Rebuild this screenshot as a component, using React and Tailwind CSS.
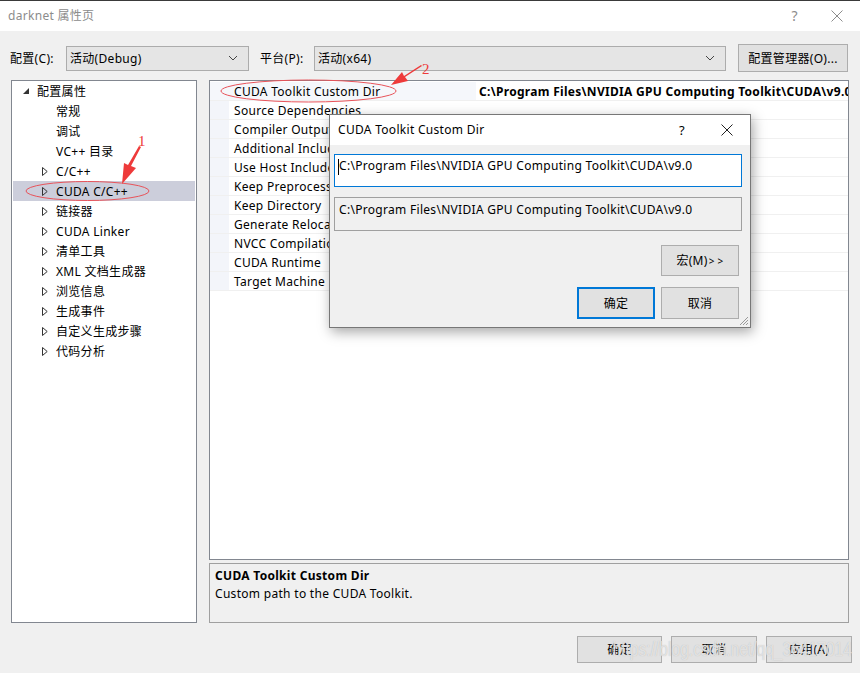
import React from 'react';

const treeItems = [
  { label: '配置属性', level: 0, expanded: true },
  { label: '常规', level: 1 },
  { label: '调试', level: 1 },
  { label: 'VC++ 目录', level: 1 },
  { label: 'C/C++', level: 1, arrow: true },
  { label: 'CUDA C/C++', level: 1, arrow: true, selected: true },
  { label: '链接器', level: 1, arrow: true },
  { label: 'CUDA Linker', level: 1, arrow: true },
  { label: '清单工具', level: 1, arrow: true },
  { label: 'XML 文档生成器', level: 1, arrow: true },
  { label: '浏览信息', level: 1, arrow: true },
  { label: '生成事件', level: 1, arrow: true },
  { label: '自定义生成步骤', level: 1, arrow: true },
  { label: '代码分析', level: 1, arrow: true },
];

const props = [
  'CUDA Toolkit Custom Dir',
  'Source Dependencies',
  'Compiler Output (obj/cubin)',
  'Additional Include Directories',
  'Use Host Include Directories',
  'Keep Preprocessed Files',
  'Keep Directory',
  'Generate Relocatable Device Code',
  'NVCC Compilation Type',
  'CUDA Runtime',
  'Target Machine Platform',
];

function Chevron() {
  return (
    <svg width="10" height="6" viewBox="0 0 10 6" className="shrink-0">
      <path d="M1 1 L5 5 L9 1" fill="none" stroke="#444" strokeWidth="1" />
    </svg>
  );
}

function Select({ text, width }) {
  return (
    <div className={`${width} h-[25px] bg-[#e5e5e5] border border-[#acacac] flex items-center justify-between pl-[3px] pr-[10px]`}>
      <span className="pt-[1px]">{text}</span>
      <Chevron />
    </div>
  );
}

function Btn({ children, className = '' }) {
  return (
    <div className={`bg-[#e1e1e1] border border-[#adadad] flex items-center justify-center ${className}`}>
      {children}
    </div>
  );
}

function TreeRow({ item }) {
  return (
    <div className={`h-[20px] mx-[1px] flex items-center ${item.selected ? 'bg-[#cccedb]' : ''}`}>
      {item.level === 0 ? (
        <>
          <svg width="7" height="7" viewBox="0 0 7 7" className="ml-[10px] mr-[7px]">
            <path d="M6 0 L6 6 L0 6 Z" fill="#333" />
          </svg>
          <span className="pt-[2px]">{item.label}</span>
        </>
      ) : (
        <>
          <span className="w-[43px] pl-[29px] flex items-center">
            {item.arrow && (
              <svg width="6" height="9" viewBox="0 0 6 9">
                <path d="M0.5 0.5 L5.2 4.5 L0.5 8.5 Z" fill="none" stroke="#333" strokeWidth="1" />
              </svg>
            )}
          </span>
          <span className="pt-[2px]">{item.label}</span>
        </>
      )}
    </div>
  );
}

export default function App() {
  return (
    <div className="relative w-[860px] h-[673px] overflow-hidden bg-[#f0f0f0] text-[12px] tracking-[0.3px] text-black font-['Noto_Sans','Noto_Sans_CJK_SC',sans-serif] leading-none">
      {/* title bar */}
      <div className="h-[31px] bg-white border-t border-[#3a3a3a] flex items-center justify-between pl-[8px]">
        <span className="text-[#8c8c8c] text-[12px]">darknet 属性页</span>
        <div className="flex items-center text-[#8c8c8c]">
          <span className="text-[14px] mr-[33px]">?</span>
          <svg width="12" height="12" viewBox="0 0 12 12" className="mr-[17px]">
            <path d="M0.5 0.5 L11.5 11.5 M11.5 0.5 L0.5 11.5" stroke="#8c8c8c" strokeWidth="1" />
          </svg>
        </div>
      </div>

      {/* config row */}
      <div className="flex items-center mt-[13px] h-[28px] pl-[10px]">
        <span className="w-[56px] pt-[1px]">配置(C):</span>
        <Select text="活动(Debug)" width="w-[183px]" />
        <span className="ml-[11px] w-[54px] pt-[1px]">平台(P):</span>
        <Select text="活动(x64)" width="w-[412px]" />
        <Btn className="ml-[12px] w-[110px] h-[28px] pt-[1px]">配置管理器(O)...</Btn>
      </div>

      {/* main area */}
      <div className="flex mt-[8px] pl-[11px] h-[543px]">
        <div className="w-[186px] h-full bg-white border border-[#828790]">
          {treeItems.map((it) => (
            <TreeRow key={it.label} item={it} />
          ))}
        </div>
        <div className="ml-[12px] w-[640px] flex flex-col">
          <div className="h-[480px] bg-white border border-[#828790] pt-[1px] overflow-hidden">
            {props.map((p, i) => (
              <div key={p} className="h-[19px] flex border-b border-[#f0f0f0]">
                <div className={`w-[19px] ${i === 0 ? 'bg-[#f5f7fb]' : 'bg-[#f3f5fa]'}`} />
                <div className={`w-[247px] pl-[5px] pt-[2px] flex items-center whitespace-nowrap overflow-hidden ${i === 0 ? 'bg-[#f5f7fb]' : 'bg-white'}`}>
                  {p}
                </div>
                <div className="flex-1 min-w-0 pl-[3px] pt-[2px] flex items-center whitespace-nowrap overflow-hidden font-bold">
                  {i === 0 ? 'C:\\Program Files\\NVIDIA GPU Computing Toolkit\\CUDA\\v9.0' : ''}
                </div>
              </div>
            ))}
          </div>
          <div className="mt-[3px] h-[60px] bg-[#f0f0f0] border border-[#a0a0a0] pl-[5px] pt-[6px]">
            <div className="font-bold h-[12px]">CUDA Toolkit Custom Dir</div>
            <div className="mt-[6px]">Custom path to the CUDA Toolkit.</div>
          </div>
        </div>
      </div>

      {/* bottom buttons */}
      <div className="relative flex justify-end mt-[13px] pr-[8px] gap-[9px]">
        <Btn className="w-[85px] h-[27px] pt-[1px]">确定</Btn>
        <Btn className="w-[86px] h-[27px] pt-[1px]">取消</Btn>
        <Btn className="w-[86px] h-[27px] pt-[1px]">应用(A)</Btn>
        <span className="absolute right-[8px] top-[3px] origin-right scale-x-[0.78] text-[20px] tracking-normal font-['Liberation_Sans',sans-serif] text-white/60 [text-shadow:0_0_1px_#b0b0b0] whitespace-nowrap pointer-events-none">
          https://blog.csdn.net/qq_36417014
        </span>
      </div>

      {/* modal dialog */}
      <div className="absolute left-[329px] top-[114px] w-[422px] h-[214px] bg-[#f0f0f0] border border-[#777] shadow-[2px_4px_12px_rgba(0,0,0,0.35)]">
        <div className="h-[30px] bg-white flex items-center justify-between pl-[8px]">
          <span>CUDA Toolkit Custom Dir</span>
          <div className="flex items-center">
            <span className="text-[13px] mr-[36px]">?</span>
            <svg width="12" height="12" viewBox="0 0 12 12" className="mr-[17px]">
              <path d="M0.5 0.5 L11.5 11.5 M11.5 0.5 L0.5 11.5" stroke="#222" strokeWidth="1" />
            </svg>
          </div>
        </div>
        <div className="px-[4px]">
          <div className="mt-[9px] w-[408px] h-[33px] bg-white border border-[#0078d7] pl-[3px] pt-[5px] flex items-start">
            <span className="w-[1px] h-[16px] bg-black -mt-[1px]" />
            <span>C:\Program Files\NVIDIA GPU Computing Toolkit\CUDA\v9.0</span>
          </div>
          <div className="mt-[10px] w-[408px] h-[34px] bg-[#f0f0f0] border border-[#a0a0a0] pl-[4px] pt-[6px]">
            C:\Program Files\NVIDIA GPU Computing Toolkit\CUDA\v9.0
          </div>
          <div className="flex justify-end pr-[7px] mt-[14px]">
            <Btn className="w-[78px] h-[31px] pt-[1px]">
              宏(M)<span className="text-[10px] ml-[1px]">&gt; &gt;</span>
            </Btn>
          </div>
          <div className="flex justify-end pr-[7px] mt-[11px] gap-[6px]">
            <Btn className="w-[78px] h-[32px] pt-[1px] !border-2 !border-[#0078d7]">确定</Btn>
            <Btn className="w-[78px] h-[32px] pt-[1px]">取消</Btn>
          </div>
        </div>
        <svg width="10" height="10" viewBox="0 0 10 10" className="absolute right-[1px] bottom-[1px]">
          <path d="M9 1 L1 9 M9 4 L4 9 M9 7 L7 9" stroke="#999" strokeWidth="1" />
        </svg>
      </div>

      {/* red annotations */}
      <svg width="860" height="673" className="absolute left-0 top-0 pointer-events-none">
        <ellipse cx="87.5" cy="191" rx="61.5" ry="9.5" fill="none" stroke="#e8535a" strokeWidth="1" />
        <ellipse cx="308.5" cy="91" rx="87.5" ry="11" fill="none" stroke="#e8535a" strokeWidth="1" />
        <path d="M141 147 L131 166 L136 168 L122 184 L124 163 L128 165 L139 146 Z" fill="#ee3a3a" />
        <path d="M422 66 L405 77 L408 81 L391 85 L402 72 L404 76 L421 65 Z" fill="#ee3a3a" />
        <text x="138" y="146" fill="#ee3a3a" fontSize="15" fontFamily="Liberation Serif, serif">1</text>
        <text x="422" y="74" fill="#ee3a3a" fontSize="15" fontFamily="Liberation Serif, serif">2</text>
      </svg>
    </div>
  );
}
